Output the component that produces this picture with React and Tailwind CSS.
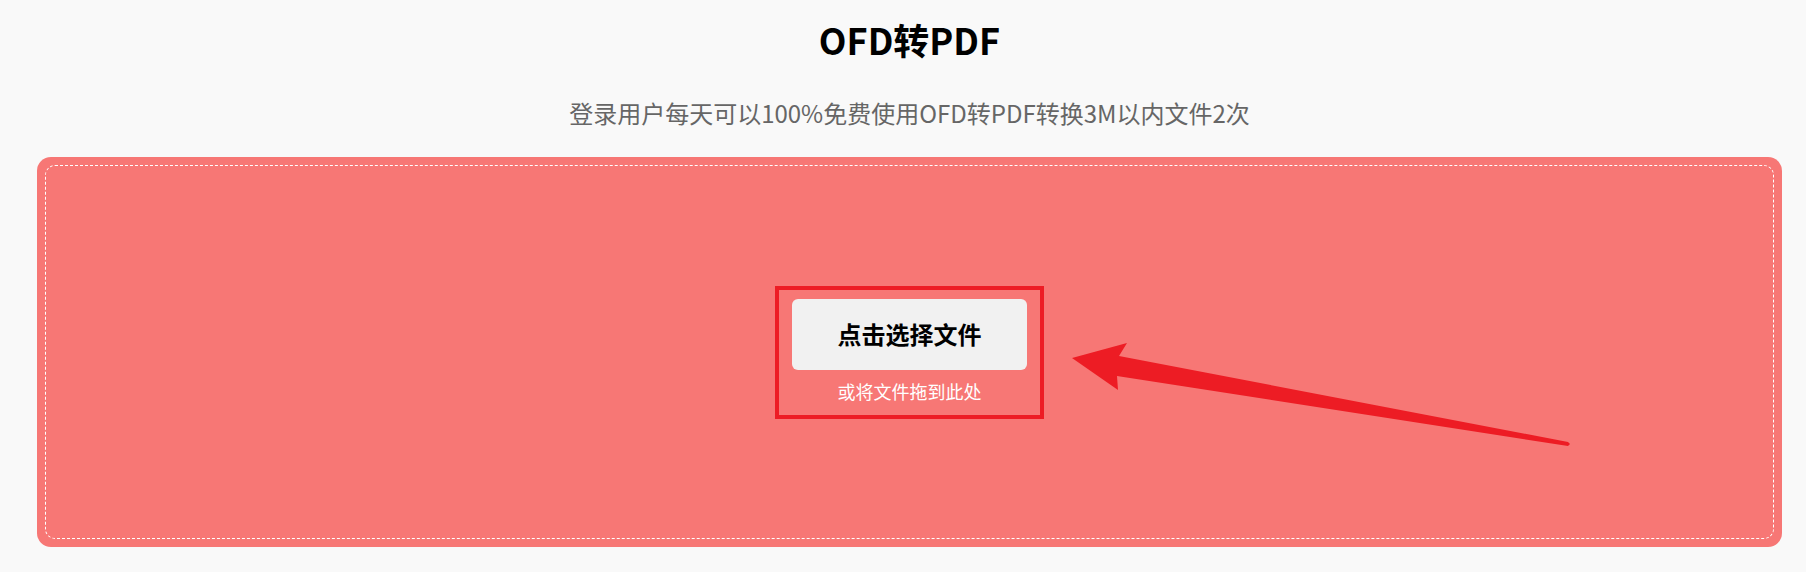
export default function App() {
  return (
    <div
      className="min-h-[572px] bg-[#f9f9f9] pl-[37px] pr-[24px] pt-[19px] pb-[25px]"
      style={{ fontFamily: '"Noto Sans CJK SC", "Noto Sans", sans-serif' }}
    >
      {/* Heading */}
      <h1 className="text-center text-[36px] leading-[40px] font-bold text-black">OFD转PDF</h1>
      <p className="mt-[38px] text-center text-[24px] leading-[32px] text-[#666666]">
        登录用户每天可以100%免费使用OFD转PDF转换3M以内文件2次
      </p>

      {/* Upload panel */}
      <div className="relative mt-[28px] h-[390px] rounded-[14px] bg-[#f77775] p-[8px]">
        <div className="flex h-full items-center justify-center rounded-[10px] border border-dashed border-white">
          <div className="flex flex-col items-center border-[4px] border-[#ed1c24] px-[13px] pt-[9px] pb-[11px]">
            <button className="h-[71px] w-[235px] cursor-pointer rounded-[6px] bg-[#f1f1f1] text-[24px] font-bold text-black">
              点击选择文件
            </button>
            <p className="mt-[8px] text-[18px] leading-[26px] text-white">或将文件拖到此处</p>
          </div>
        </div>

        <svg
          className="pointer-events-none absolute inset-0"
          width="1745"
          height="390"
          viewBox="37 157 1745 390"
        >
          <polygon
            fill="#ed1c24"
            points="1072,358 1127,343 1119,356 1568,442 1570,444 1568,446 1117,376 1118,390"
          />
        </svg>
      </div>
    </div>
  )
}
